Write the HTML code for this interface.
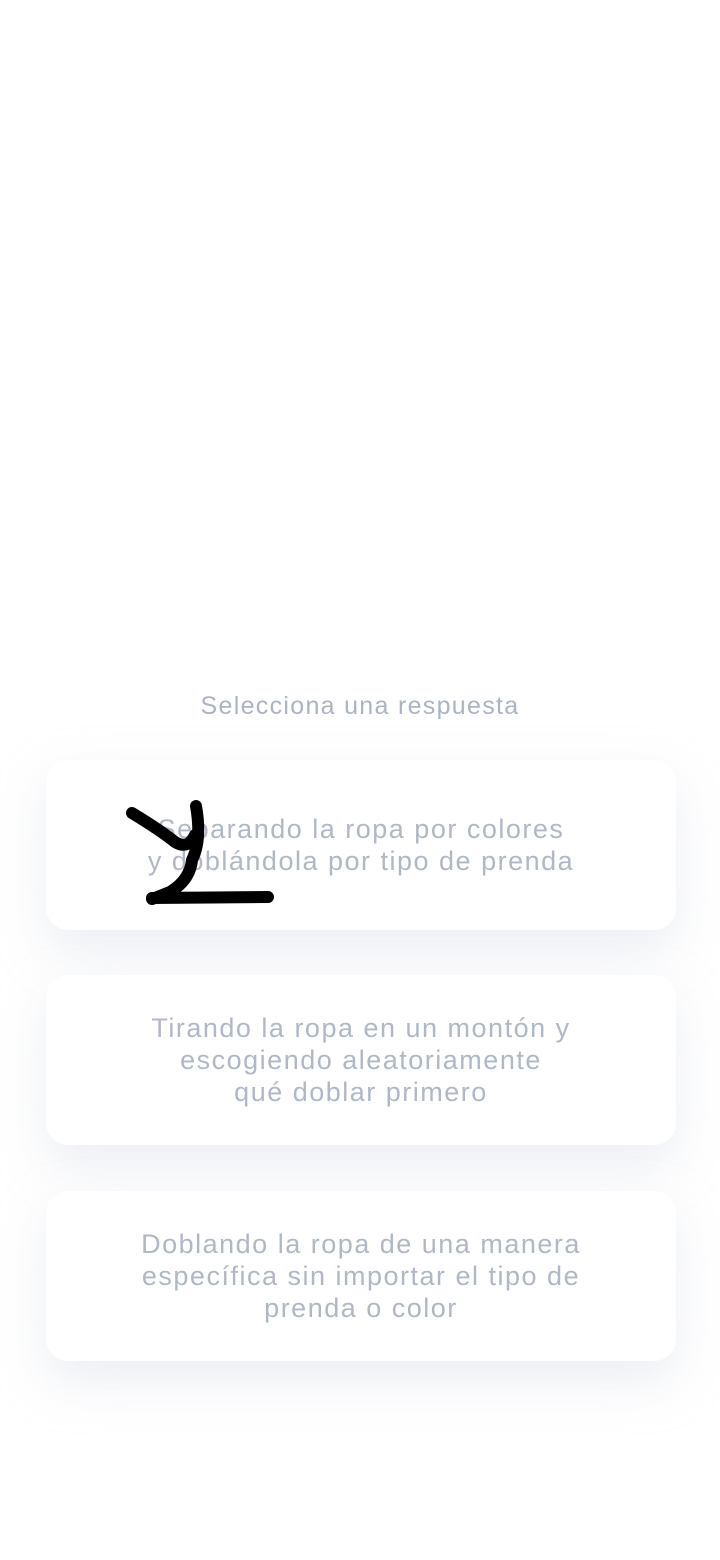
<!DOCTYPE html>
<html><head><meta charset="utf-8"><style>
html,body{margin:0;padding:0;background:#fff;width:720px;height:1560px;overflow:hidden;font-family:"Liberation Sans",sans-serif}
.t{position:absolute;left:0;width:720px;top:692px;text-align:center;color:#abb4c3;font-size:25px;letter-spacing:1.3px}
.c{position:absolute;left:46px;width:630px;height:170px;background:#fff;border-radius:22px;box-shadow:0 20px 50px rgba(200,205,220,0.35);display:flex;align-items:center;justify-content:center;text-align:center;color:#b0b8c6;font-size:27px;letter-spacing:1.5px;line-height:32px}
</style></head><body>
<div class="t">Selecciona una respuesta</div>
<div class="c" style="top:760px">Separando la ropa por colores<br>y doblándola por tipo de prenda</div>
<div class="c" style="top:975px">Tirando la ropa en un montón y<br>escogiendo aleatoriamente<br>qué doblar primero</div>
<div class="c" style="top:1191px">Doblando la ropa de una manera<br>específica sin importar el tipo de<br>prenda o color</div>
<svg style="position:absolute;left:0;top:0" width="720" height="1560">
<g fill="none" stroke="#000" stroke-width="12" stroke-linecap="round" stroke-linejoin="round">
<path d="M132 813 Q160 830 175 842 Q188 850 195 835"/>
<path d="M196 806 Q202 840 192 860 Q190 880 170 892 Q155 898 152 899"/>
<path d="M152 898 L268 897"/>
</g></svg>
</body></html>
